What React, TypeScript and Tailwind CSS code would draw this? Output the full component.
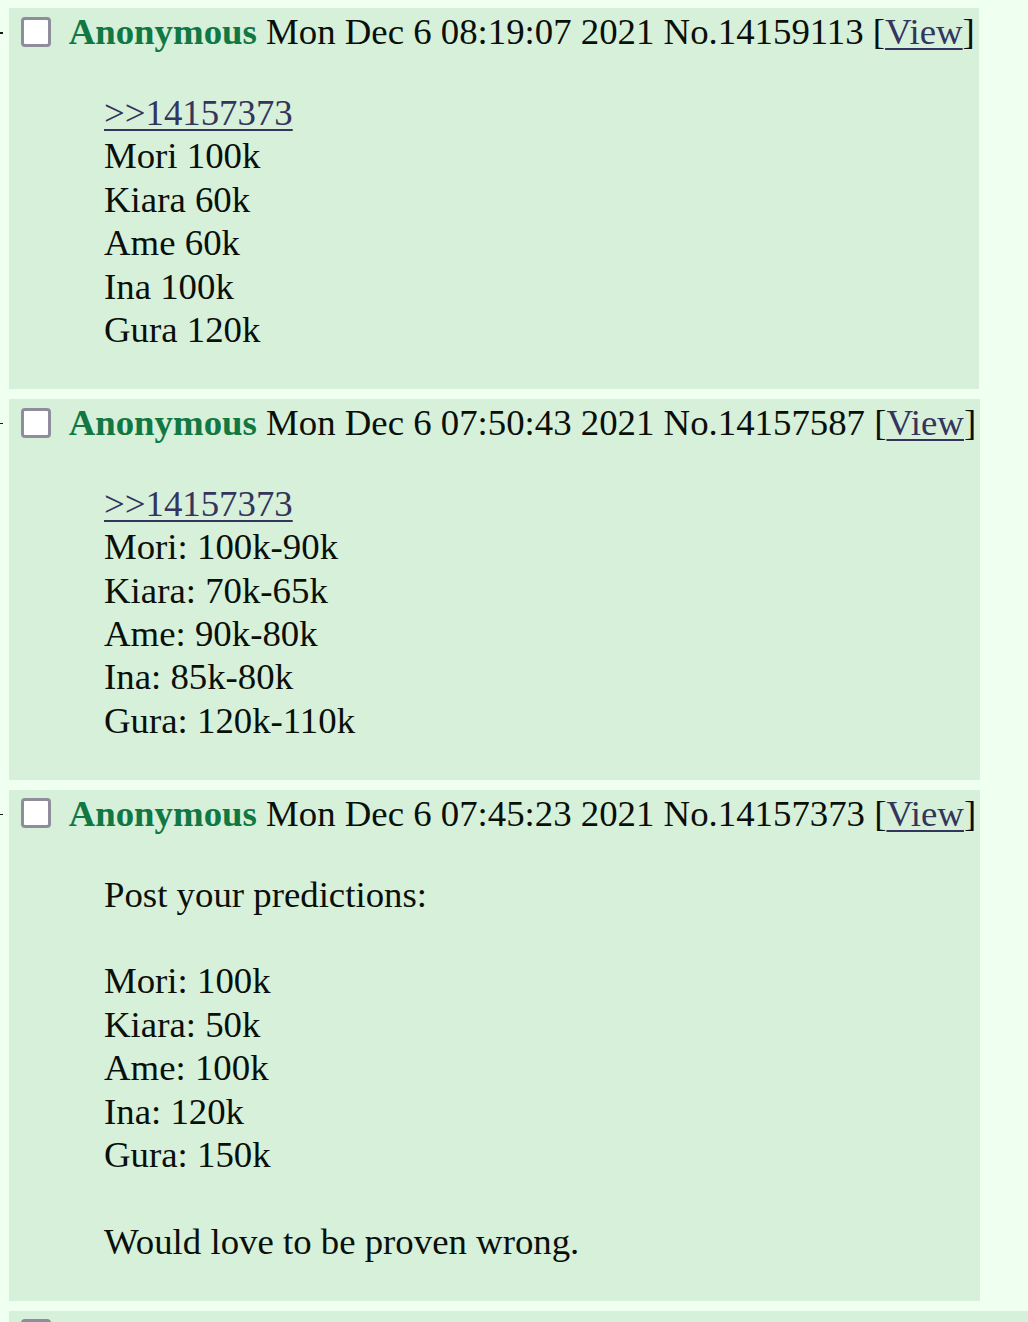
import React from "react";

type Post = {
  date: string;
  no: string;
  lines: { text: string; quote?: boolean }[];
  wide?: boolean;
};

const posts: Post[] = [
  {
    date: "Mon Dec 6 08:19:07 2021",
    no: "14159113",
    lines: [
      { text: ">>14157373", quote: true },
      { text: "Mori 100k" },
      { text: "Kiara 60k" },
      { text: "Ame 60k" },
      { text: "Ina 100k" },
      { text: "Gura 120k" },
    ],
  },
  {
    date: "Mon Dec 6 07:50:43 2021",
    no: "14157587",
    lines: [
      { text: ">>14157373", quote: true },
      { text: "Mori: 100k-90k" },
      { text: "Kiara: 70k-65k" },
      { text: "Ame: 90k-80k" },
      { text: "Ina: 85k-80k" },
      { text: "Gura: 120k-110k" },
    ],
  },
  {
    date: "Mon Dec 6 07:45:23 2021",
    no: "14157373",
    lines: [
      { text: "Post your predictions:" },
      { text: "" },
      { text: "Mori: 100k" },
      { text: "Kiara: 50k" },
      { text: "Ame: 100k" },
      { text: "Ina: 120k" },
      { text: "Gura: 150k" },
      { text: "" },
      { text: "Would love to be proven wrong." },
    ],
  },
  {
    date: "Sat Nov 27 10:41:08 2021",
    no: "13674333",
    lines: [
      { text: ">>13673911", quote: true },
      { text: "Mori 90k" },
      { text: "Kiara 55k" },
    ],
    wide: true,
  },
];

function PostBox({ p }: { p: Post }) {
  return (
    <div className="flex w-full items-start">
      <div className="w-[9px] shrink-0 pt-[24px]">
        <div className="h-[1.5px] w-[3px] bg-[#1a1a1a]" />
      </div>
      <div
        className={
          "bg-[#d6f0da] pt-[2px] pr-[4px] " + (p.wide ? "flex-1" : "w-fit")
        }
      >
        <div className="flex items-start whitespace-nowrap">
          <span className="ml-[11.7px] mr-[18px] mt-[6.7px] box-border block h-[30px] w-[30px] shrink-0 rounded-[4px] border-[3px] border-[#8f8c9b] bg-white" />
          <span>
            <span className="font-bold text-[#117743]">Anonymous</span>{" "}
            {p.date} No.{p.no} [
            <a className="text-[#34345c] underline decoration-[2px] underline-offset-[4px]">
              View
            </a>
            ]
          </span>
        </div>
        <div className="ml-[95px] my-[37.6px] whitespace-nowrap">
          {p.lines.map((l, i) =>
            l.text === "" ? (
              <div key={i} className="h-[43.4px]" />
            ) : l.quote ? (
              <div key={i}>
                <a className="text-[#34345c] underline decoration-[2px] underline-offset-[4px]">
                  {l.text}
                </a>
              </div>
            ) : (
              <div key={i}>{l.text}</div>
            )
          )}
        </div>
      </div>
    </div>
  );
}

export default function App() {
  return (
    <div className="min-h-screen overflow-hidden bg-[#effff0] font-['Liberation_Serif',serif] text-[36.8px] leading-[43.4px] text-[#0a0f0a]">
      <div className="flex flex-col items-start gap-[9.8px] pt-[8px]">
        {posts.map((p) => (
          <PostBox key={p.no} p={p} />
        ))}
      </div>
    </div>
  );
}
